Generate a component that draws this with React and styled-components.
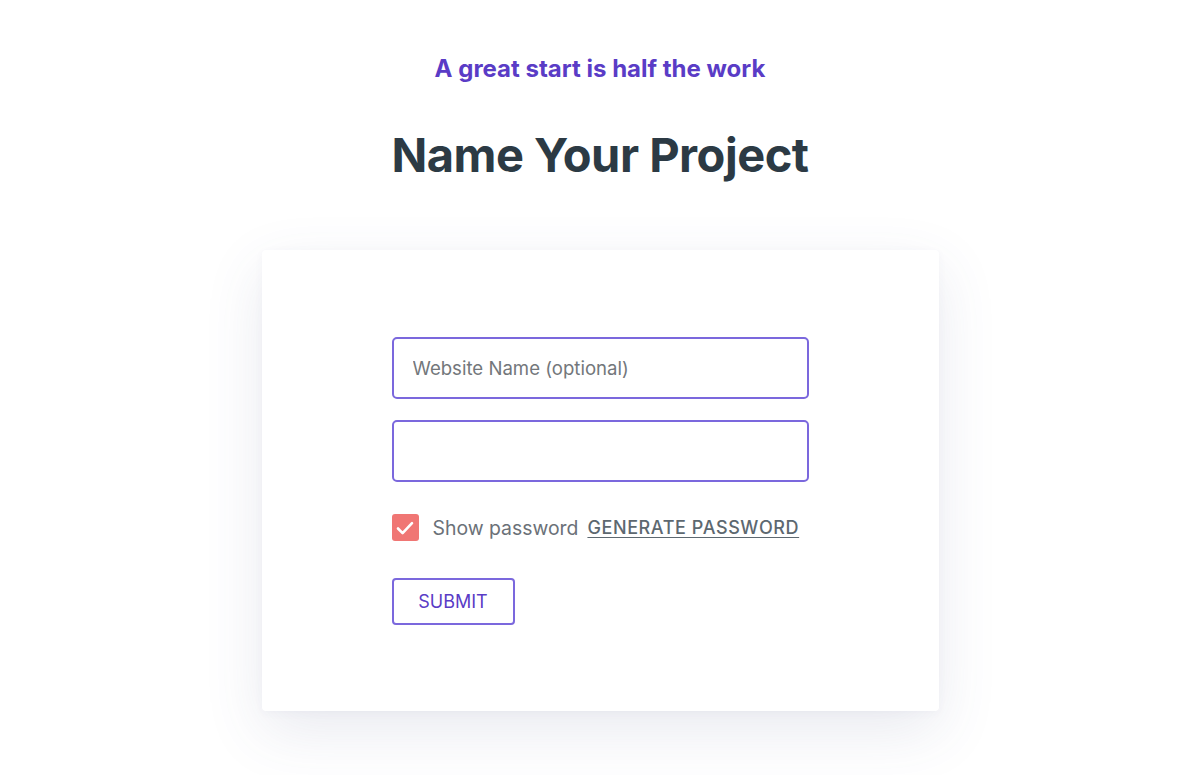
import React, { useState } from "react";
import styled, { createGlobalStyle } from "styled-components";

const GlobalStyle = createGlobalStyle`
  * { box-sizing: border-box; }
  body {
    margin: 0;
    background: #ffffff;
    font-family: Inter, "Noto Sans", sans-serif;
  }
`;

export default function App() {
  const [show, setShow] = useState(true);

  return (
    <>
      <GlobalStyle />
      <Page>
        <Tagline>A great start is half the work</Tagline>
        <Title>Name Your Project</Title>
        <Card>
          <Form onSubmit={(e) => e.preventDefault()}>
            <Input placeholder="Website Name (optional)" autoFocus />
            <Input type={show ? "text" : "password"} />
            <CheckRow>
              <Check checked={show} onClick={() => setShow(!show)}>
                <svg width="22" height="22" viewBox="0 0 22 22" fill="none">
                  <path
                    d="M4 11.5l4.6 4.6L18 6.2"
                    stroke="#fff"
                    strokeWidth="2.6"
                    strokeLinecap="round"
                    strokeLinejoin="round"
                  />
                </svg>
              </Check>
              <CheckLabel>Show password</CheckLabel>
              <GenLink href="#">GENERATE PASSWORD</GenLink>
            </CheckRow>
            <Submit type="submit">SUBMIT</Submit>
          </Form>
        </Card>
      </Page>
    </>
  );
}

const Page = styled.div`
  display: flex;
  flex-direction: column;
  align-items: center;
  padding-top: 54px;
  min-height: 775px;
`;

const Tagline = styled.div`
  font-size: 24px;
  font-weight: 700;
  color: #5a3cc6;
  line-height: 30px;
`;

const Title = styled.h1`
  margin: 43px 0 0;
  font-size: 47px;
  font-weight: 700;
  color: #2c3a44;
  line-height: 56px;
  letter-spacing: -0.5px;
`;

const Card = styled.div`
  margin-top: 67px;
  width: 677px;
  background: #ffffff;
  border-radius: 4px;
  padding: 87px 130px 86px;
  box-shadow: 0 20px 60px rgba(70, 80, 130, 0.12), 0 2px 8px rgba(70, 80, 130, 0.04);
`;

const Form = styled.form`
  display: flex;
  flex-direction: column;
  align-items: flex-start;
`;

const Input = styled.input`
  width: 417px;
  height: 62px;
  border: 2px solid #7b68dd;
  border-radius: 5px;
  padding: 0 19px;
  font-family: Inter, "Noto Sans", sans-serif;
  font-size: 18.6px;
  color: #333;
  caret-color: #555;
  outline: none;
  margin-bottom: 21px;

  &::placeholder {
    color: #73777b;
  }
`;

const CheckRow = styled.div`
  display: flex;
  align-items: center;
  margin-top: 11px;
`;

const Check = styled.div`
  width: 27px;
  height: 27px;
  border-radius: 3px;
  background: ${(p) => (p.checked ? "#f07674" : "#fff")};
  border: ${(p) => (p.checked ? "none" : "2px solid #aaa")};
  display: flex;
  align-items: center;
  justify-content: center;
  cursor: pointer;
`;

const CheckLabel = styled.span`
  margin-left: 14px;
  font-size: 19.4px;
  color: #6b7178;
`;

const GenLink = styled.a`
  margin-left: 9px;
  font-size: 18px;
  font-weight: 500;
  color: #5d6870;
  text-decoration: underline;
  text-underline-offset: 3px;
  letter-spacing: 0.6px;
`;

const Submit = styled.button`
  margin-top: 37px;
  width: 123px;
  height: 47px;
  background: #fff;
  border: 2px solid #7b68dd;
  border-radius: 4px;
  font-family: Inter, "Noto Sans", sans-serif;
  font-size: 18px;
  color: #5a3cc6;
  cursor: pointer;
`;
